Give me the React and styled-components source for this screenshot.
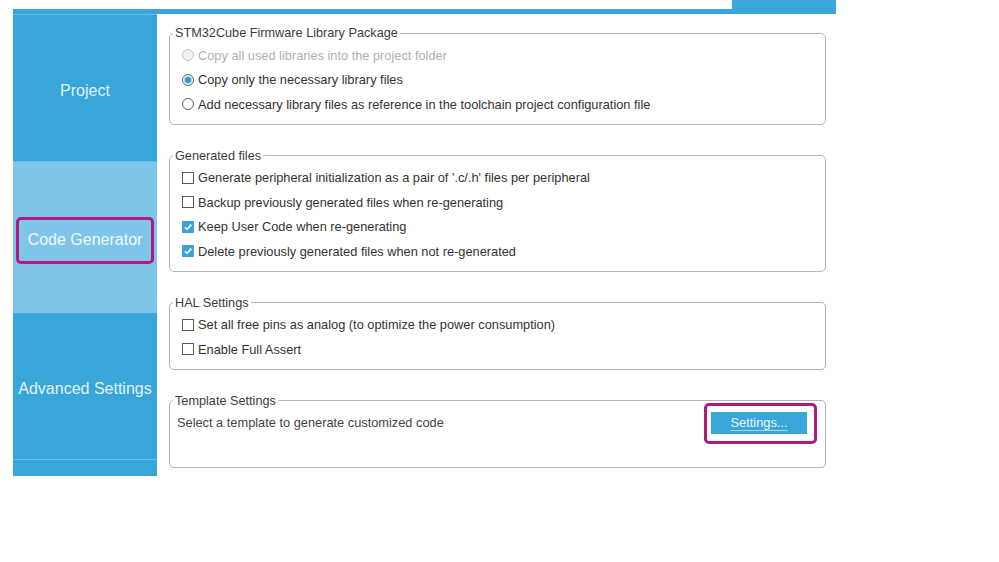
import React from 'react';
import styled, { createGlobalStyle } from 'styled-components';

const GlobalStyle = createGlobalStyle`
  html, body {
    margin: 0;
    padding: 0;
    background: #ffffff;
    font-family: "Liberation Sans", Arial, sans-serif;
  }
  * { box-sizing: border-box; }
`;

const Page = styled.div`
  width: 999px;
  height: 562px;
  padding-left: 13px;
  overflow: hidden;
`;

const TopBar = styled.div`
  display: flex;
  align-items: flex-end;
  width: 823px;
  height: 14px;
`;

const TopLine = styled.div`
  flex: 1;
  height: 5px;
  background: #39a6da;
`;

const TopTab = styled.div`
  width: 104px;
  height: 14px;
  background: #39a6da;
`;

const Main = styled.div`
  display: flex;
  align-items: flex-start;
`;

const Sidebar = styled.nav`
  width: 144px;
  display: flex;
  flex-direction: column;
  background: #39a6da;
  border-top: 1px solid #64bdea;
`;

const NavItem = styled.div`
  height: ${({ $h }) => $h}px;
  display: flex;
  align-items: center;
  justify-content: center;
  padding-top: 5px;
  background: ${({ $active }) => ($active ? '#7fc5e8' : '#39a6da')};
  border-bottom: ${({ $line }) => ($line ? '1px solid #62bcea' : 'none')};
  color: ${({ $active }) => ($active ? '#eef8fd' : '#e2f2fb')};
  font-size: 16px;
  white-space: nowrap;
`;

const Highlight = styled.span`
  display: flex;
  align-items: center;
  justify-content: center;
  width: 138px;
  height: 47px;
  border: 3px solid #b01a7c;
  border-radius: 5px;
`;

const Filler = styled.div`
  height: 16px;
`;

const Content = styled.div`
  width: 668px;
  padding-left: 12px;
  display: flex;
  flex-direction: column;
  gap: 24px;
  padding-top: 12px;
`;

const Group = styled.fieldset`
  margin: 0;
  width: 657px;
  border: 1px solid #b4b4b4;
  border-radius: 5px;
  padding: 3px 8px ${({ $pb }) => $pb ?? 7}px 3px;
  min-width: 0;
`;

const Legend = styled.legend`
  padding: 0 2px;
  font-size: 12.7px;
  line-height: 14px;
  color: #3c3c3c;
`;

const Row = styled.label`
  display: flex;
  align-items: center;
  gap: 4px;
  height: 24.5px;
  padding-left: 9px;
  font-size: 12.8px;
  color: ${({ $disabled }) => ($disabled ? '#b0b0b0' : '#333333')};
  white-space: nowrap;
`;

const Radio = styled.span`
  position: relative;
  width: 12px;
  height: 12px;
  border-radius: 50%;
  border: 1px solid ${({ $disabled }) => ($disabled ? '#c4c4c4' : '#5a5a5a')};
  background: ${({ $disabled }) => ($disabled ? '#f2f2f2' : '#ffffff')};
  flex-shrink: 0;

  &::after {
    content: '';
    display: ${({ $checked }) => ($checked ? 'block' : 'none')};
    position: absolute;
    left: 2px;
    top: 2px;
    width: 6px;
    height: 6px;
    border-radius: 50%;
    background: #2f98d4;
    box-shadow: 0 0 0 1px #a9d6ef;
  }
`;

const Box = styled.span`
  display: flex;
  align-items: center;
  justify-content: center;
  width: 12px;
  height: 12px;
  border: 1px solid ${({ $checked }) => ($checked ? '#3aa2dc' : '#5a5a5a')};
  background: ${({ $checked }) => ($checked ? '#3aa2dc' : '#ffffff')};
  flex-shrink: 0;
`;

const TemplateRow = styled.div`
  display: flex;
  align-items: center;
  justify-content: space-between;
  height: 41px;
  margin-top: -8px;
  padding-left: 4px;
  font-size: 12.8px;
  color: #444444;
`;

const TemplateText = styled.span`
  margin-top: -2px;
`;

const ButtonFrame = styled.div`
  display: flex;
  border: 3px solid #b01a7c;
  border-radius: 5px;
  padding: 6px 7px 7px 4px;
`;

const SettingsButton = styled.button`
  width: 96px;
  height: 22px;
  border: none;
  background: #39a6da;
  color: #eaf6fc;
  font-family: "Liberation Sans", Arial, sans-serif;
  font-size: 12.8px;
  text-decoration: underline;
  text-decoration-color: rgba(255, 255, 255, 0.55);
  text-underline-offset: 3px;
  padding: 0;
`;

function Check({ checked }) {
  return (
    <Box $checked={checked}>
      {checked && (
        <svg width="10" height="10" viewBox="0 0 10 10">
          <polyline points="1.8,5.2 4,7.4 8.3,2.6" fill="none" stroke="#ffffff" strokeWidth="1.6" />
        </svg>
      )}
    </Box>
  );
}

const generated = [
  { text: "Generate peripheral initialization as a pair of '.c/.h' files per peripheral", checked: false },
  { text: 'Backup previously generated files when re-generating', checked: false },
  { text: 'Keep User Code when re-generating', checked: true },
  { text: 'Delete previously generated files when not re-generated', checked: true },
];

const hal = [
  { text: 'Set all free pins as analog (to optimize the power consumption)', checked: false },
  { text: 'Enable Full Assert', checked: false },
];

export default function App() {
  return (
    <>
      <GlobalStyle />
      <Page>
        <TopBar>
          <TopLine />
          <TopTab />
        </TopBar>
        <Main>
          <Sidebar>
            <NavItem $h={147} $line>Project</NavItem>
            <NavItem $h={151} $active>
              <Highlight>Code Generator</Highlight>
            </NavItem>
            <NavItem $h={147} $line>Advanced Settings</NavItem>
            <Filler />
          </Sidebar>

          <Content>
            <Group>
              <Legend>STM32Cube Firmware Library Package</Legend>
              <Row $disabled>
                <Radio $disabled />
                Copy all used libraries into the project folder
              </Row>
              <Row>
                <Radio $checked />
                Copy only the necessary library files
              </Row>
              <Row>
                <Radio />
                Add necessary library files as reference in the toolchain project configuration file
              </Row>
            </Group>

            <Group>
              <Legend>Generated files</Legend>
              {generated.map((g) => (
                <Row key={g.text}>
                  <Check checked={g.checked} />
                  {g.text}
                </Row>
              ))}
            </Group>

            <Group>
              <Legend>HAL Settings</Legend>
              {hal.map((g) => (
                <Row key={g.text}>
                  <Check checked={g.checked} />
                  {g.text}
                </Row>
              ))}
            </Group>

            <Group $pb={23}>
              <Legend>Template Settings</Legend>
              <TemplateRow>
                <TemplateText>Select a template to generate customized code</TemplateText>
                <ButtonFrame>
                  <SettingsButton>Settings...</SettingsButton>
                </ButtonFrame>
              </TemplateRow>
            </Group>
          </Content>
        </Main>
      </Page>
    </>
  );
}
